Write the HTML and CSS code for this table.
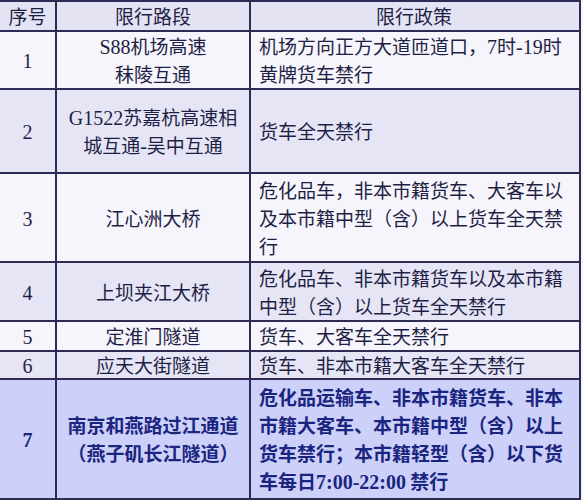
FILE: index.html
```html
<!DOCTYPE html>
<html lang="zh-CN">
<head>
<meta charset="utf-8">
<link rel="stylesheet" href="styles.css">
</head>
<body>
<table class="tbl">
  <colgroup>
    <col class="c-no">
    <col class="c-road">
    <col class="c-policy">
  </colgroup>
  <tr class="head r-h">
    <td class="no">序号</td>
    <td class="road">限行路段</td>
    <td class="policy center">限行政策</td>
  </tr>
  <tr class="odd r1">
    <td class="no"><span class="num">1</span></td>
    <td class="road"><span class="num">S88</span>机场高速<br>秣陵互通</td>
    <td class="policy">机场方向正方大道匝道口，<span class="num">7</span>时<span class="num">-19</span>时黄牌货车禁行</td>
  </tr>
  <tr class="even r2">
    <td class="no"><span class="num">2</span></td>
    <td class="road"><span class="num">G1522</span>苏嘉杭高速相<br>城互通<span class="num">-</span>吴中互通</td>
    <td class="policy">货车全天禁行</td>
  </tr>
  <tr class="odd r3">
    <td class="no"><span class="num">3</span></td>
    <td class="road">江心洲大桥</td>
    <td class="policy">危化品车，非本市籍货车、大客车以及本市籍中型（含）以上货车全天禁行</td>
  </tr>
  <tr class="even r4">
    <td class="no"><span class="num">4</span></td>
    <td class="road">上坝夹江大桥</td>
    <td class="policy">危化品车、非本市籍货车以及本市籍中型（含）以上货车全天禁行</td>
  </tr>
  <tr class="odd r5">
    <td class="no"><span class="num">5</span></td>
    <td class="road">定淮门隧道</td>
    <td class="policy">货车、大客车全天禁行</td>
  </tr>
  <tr class="even r6">
    <td class="no"><span class="num">6</span></td>
    <td class="road">应天大街隧道</td>
    <td class="policy">货车、非本市籍大客车全天禁行</td>
  </tr>
  <tr class="hl r7">
    <td class="no"><span class="num">7</span></td>
    <td class="road">南京和燕路过江通道<br>（燕子矶长江隧道）</td>
    <td class="policy">危化品运输车、非本市籍货车、非本市籍大客车、本市籍中型（含）以上货车禁行；本市籍轻型（含）以下货车每日<span class="num">7:00-22:00</span> 禁行</td>
  </tr>
</table>
</body>
</html>
```

FILE: styles.css
```css
html, body {
  margin: 0;
  padding: 0;
  background: #f3f3fa;
}
body {
  overflow: hidden;
  width: 583px;
  height: 500px;
}
.tbl {
  border-collapse: collapse;
  table-layout: fixed;
  width: 581px;
  margin-left: -2px;
  font-family: "Noto Sans CJK SC", "Noto Sans", sans-serif;
  font-size: 19px;
  line-height: 28px;
  color: #1f1f45;
}
.c-no { width: 57px; }
.c-road { width: 194px; }
.c-policy { width: 330px; }
.tbl td {
  border: 2px solid #2c2c55;
  padding: 0;
  vertical-align: middle;
}
.no, .road, .center { text-align: center; }
.policy { text-align: left; padding: 0 10px 0 8px !important; }
.policy.center { text-align: center; }
.num {
  font-family: "Liberation Serif", "Times New Roman", serif;
  font-size: 20px;
  line-height: 1;
}
.head td { background: #e3e3f3; line-height: 26px; }
.odd td { background: #f5f5fb; }
.even td { background: #e5e5f5; }
.hl td {
  background: #cdd0f8;
  color: #1a2580;
  font-weight: bold;
  line-height: 28px;
}
.r-h { height: 30px; }
.r1 { height: 58px; }
.r2 { height: 84px; }
.r3 { height: 89px; }
.r4 { height: 59px; }
.r5 { height: 30px; }
.r6 { height: 28px; }
.r7 { height: 120px; }
.r5 td, .r6 td { line-height: 24px; }
```
